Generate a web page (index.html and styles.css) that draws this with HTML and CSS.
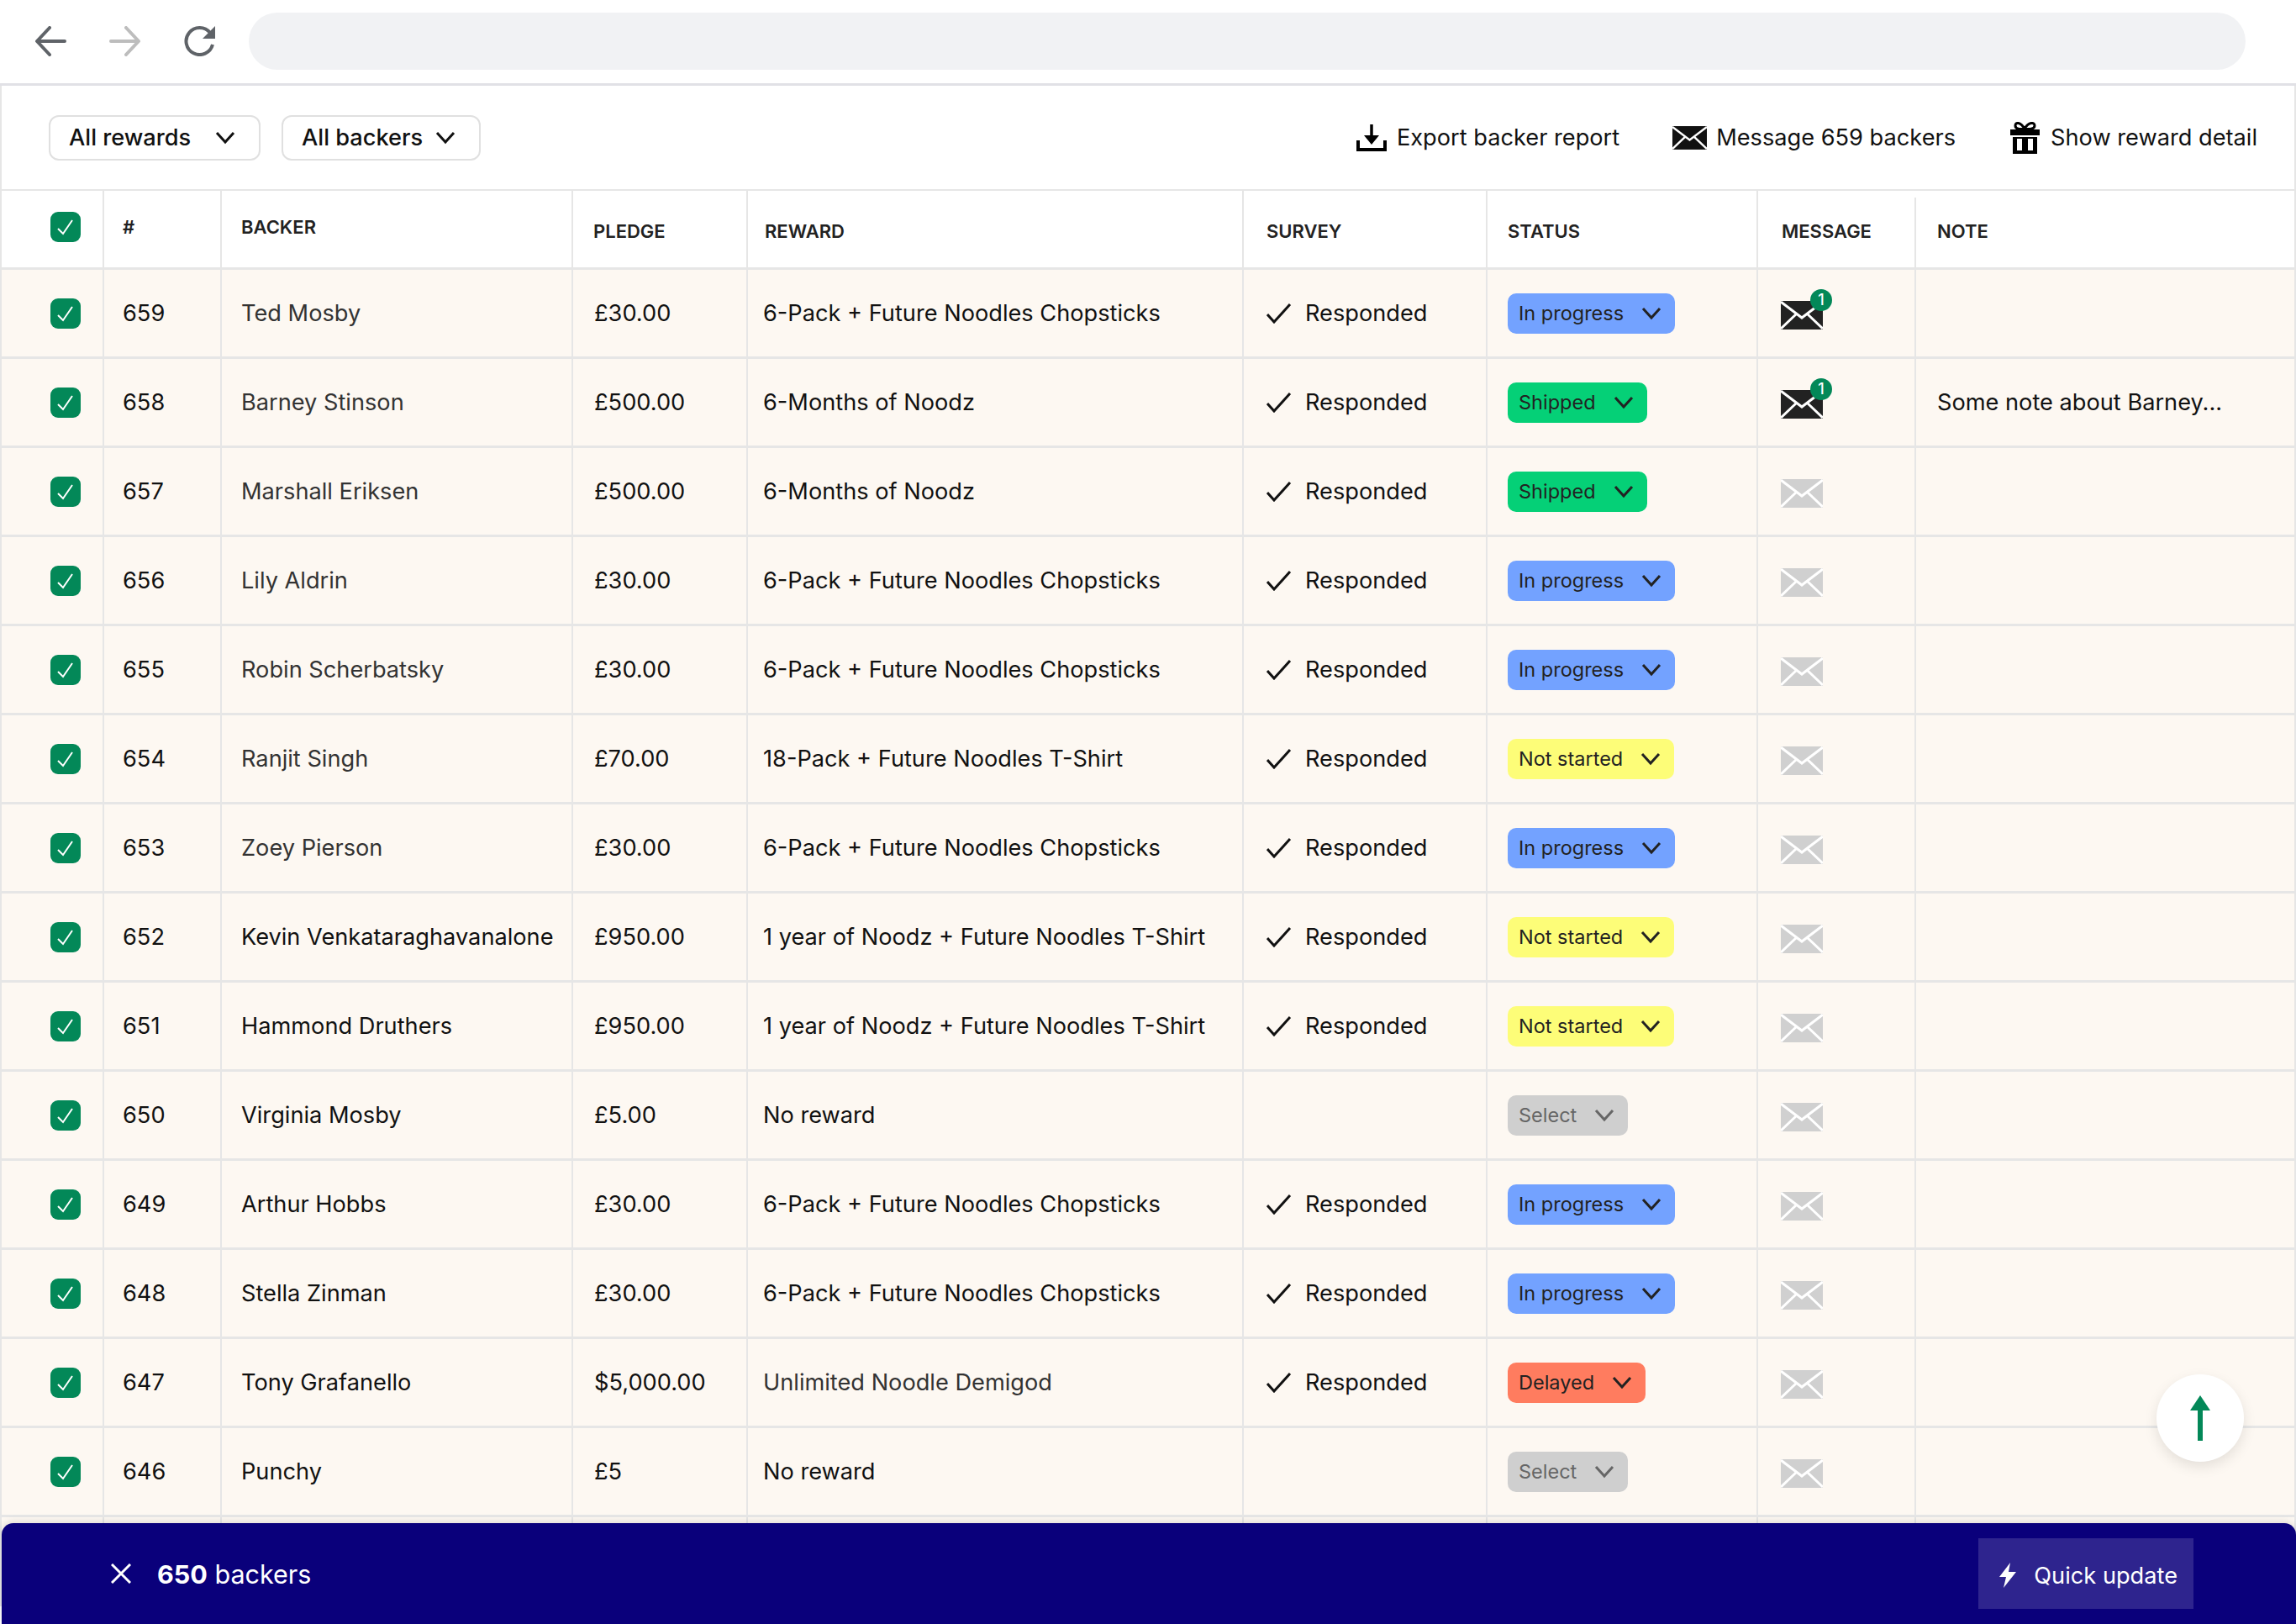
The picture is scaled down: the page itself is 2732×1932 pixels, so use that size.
FILE: index.html
```html
<!DOCTYPE html>
<html lang="en">
<head>
  <meta charset="UTF-8" />
  <title>Backer report</title>
  <link rel="stylesheet" href="styles.css">
</head>
<body>
  <svg class="defs" width="0" height="0">
    <symbol id="env" viewBox="0 0 50 34">
      <rect width="50" height="34" fill="currentColor"/>
      <path d="M0 1 25 20 50 1M0 33 19 15M50 33 31 15" fill="none" stroke="#fff" stroke-width="3"/>
    </symbol>
    <symbol id="chev" viewBox="0 0 24 16">
      <path d="M2 2 12 13 22 2" fill="none" stroke="currentColor" stroke-width="3"/>
    </symbol>
    <symbol id="box" viewBox="0 0 36 36">
      <rect width="36" height="36" rx="9" fill="#038858"/>
      <path d="M9 20 15 26 26 10" fill="none" stroke="#fff" stroke-width="2"/>
    </symbol>
    <symbol id="tick" viewBox="0 0 30 24">
      <path d="M1 13 9 22 28 1" fill="none" stroke="#111" stroke-width="3"/>
    </symbol>
  </svg>

  <header class="browser-bar">
    <svg class="nav-icon" width="38" height="36" viewBox="0 0 38 36"><path d="M36 18H4M18 2 3 18 18 34" fill="none" stroke="#5f6368" stroke-width="4" stroke-linecap="round" stroke-linejoin="round"/></svg>
    <svg class="nav-icon" width="38" height="36" viewBox="0 0 38 36"><path d="M2 18H34M20 2 35 18 20 34" fill="none" stroke="#bdbdbd" stroke-width="4" stroke-linecap="round" stroke-linejoin="round"/></svg>
    <svg class="nav-icon" width="38" height="36" viewBox="0 0 38 36"><path d="M31 8A16 16 0 1 0 34 22" fill="none" stroke="#5f6368" stroke-width="4"/><path d="M37 0V15H22Z" fill="#5f6368"/></svg>
    <div class="address"></div>
  </header>

  <div class="toolbar">
    <button class="filter filter-rewards">All rewards <svg width="24" height="16"><use href="#chev"/></svg></button>
    <button class="filter">All backers <svg width="24" height="16"><use href="#chev"/></svg></button>
    <div class="actions">
      <a class="action">
        <svg width="36" height="32" viewBox="0 0 36 32"><path d="M18 0V16" stroke="#000" stroke-width="3.5"/><path d="M9 13H27L18 24Z"/><path d="M2 19V30H34V19" fill="none" stroke="#000" stroke-width="4"/></svg>
        Export backer report
      </a>
      <a class="action action-msg">
        <svg class="env-lg" width="41" height="30"><use href="#env"/></svg>
        Message 659 backers
      </a>
      <a class="action action-gift">
        <svg width="35" height="38" viewBox="0 0 35 38"><path d="M17 8C12 0 6 0 6 4.500S12 9 17 8C22 0 29 0 29 4.500S22 9 17 8Z" fill="none" stroke="#000" stroke-width="3"/><path d="M0 9H35V16H0ZM3 18H32V38H3ZM8 20V34H14V20ZM21 20V34H27V20Z" fill-rule="evenodd"/></svg>
        Show reward detail
      </a>
    </div>
  </div>

  <table class="backers">
    <thead>
      <tr>
        <th class="high"><svg class="check" width="36" height="36"><use href="#box"/></svg></th>
        <th class="high">#</th>
        <th class="high">BACKER</th>
        <th>PLEDGE</th>
        <th>REWARD</th>
        <th>SURVEY</th>
        <th>STATUS</th>
        <th class="short-line">MESSAGE</th>
        <th>NOTE</th>
      </tr>
    </thead>
    <tbody>
      <tr>
        <td><svg class="check" width="36" height="36"><use href="#box"/></svg></td><td>659</td><td class="soft">Ted Mosby</td><td>£30.00</td><td>6-Pack + Future Noodles Chopsticks</td>
        <td><span class="survey"><svg width="30" height="24"><use href="#tick"/></svg>Responded</span></td>
        <td><span class="pill progress">In progress <svg width="24" height="16"><use href="#chev"/></svg></span></td>
        <td><span class="msg on"><svg width="50" height="34"><use href="#env"/></svg><b class="badge">1</b></span></td><td></td>
      </tr>
      <tr>
        <td><svg class="check" width="36" height="36"><use href="#box"/></svg></td><td>658</td><td class="soft">Barney Stinson</td><td>£500.00</td><td>6-Months of Noodz</td>
        <td><span class="survey"><svg width="30" height="24"><use href="#tick"/></svg>Responded</span></td>
        <td><span class="pill shipped">Shipped <svg width="24" height="16"><use href="#chev"/></svg></span></td>
        <td><span class="msg on"><svg width="50" height="34"><use href="#env"/></svg><b class="badge">1</b></span></td><td>Some note about Barney...</td>
      </tr>
      <tr>
        <td><svg class="check" width="36" height="36"><use href="#box"/></svg></td><td>657</td><td class="soft">Marshall Eriksen</td><td>£500.00</td><td>6-Months of Noodz</td>
        <td><span class="survey"><svg width="30" height="24"><use href="#tick"/></svg>Responded</span></td>
        <td><span class="pill shipped">Shipped <svg width="24" height="16"><use href="#chev"/></svg></span></td>
        <td><span class="msg"><svg width="50" height="34"><use href="#env"/></svg></span></td><td></td>
      </tr>
      <tr>
        <td><svg class="check" width="36" height="36"><use href="#box"/></svg></td><td>656</td><td class="soft">Lily Aldrin</td><td>£30.00</td><td>6-Pack + Future Noodles Chopsticks</td>
        <td><span class="survey"><svg width="30" height="24"><use href="#tick"/></svg>Responded</span></td>
        <td><span class="pill progress">In progress <svg width="24" height="16"><use href="#chev"/></svg></span></td>
        <td><span class="msg"><svg width="50" height="34"><use href="#env"/></svg></span></td><td></td>
      </tr>
      <tr>
        <td><svg class="check" width="36" height="36"><use href="#box"/></svg></td><td>655</td><td class="soft">Robin Scherbatsky</td><td>£30.00</td><td>6-Pack + Future Noodles Chopsticks</td>
        <td><span class="survey"><svg width="30" height="24"><use href="#tick"/></svg>Responded</span></td>
        <td><span class="pill progress">In progress <svg width="24" height="16"><use href="#chev"/></svg></span></td>
        <td><span class="msg"><svg width="50" height="34"><use href="#env"/></svg></span></td><td></td>
      </tr>
      <tr>
        <td><svg class="check" width="36" height="36"><use href="#box"/></svg></td><td>654</td><td class="soft">Ranjit Singh</td><td>£70.00</td><td>18-Pack + Future Noodles T-Shirt</td>
        <td><span class="survey"><svg width="30" height="24"><use href="#tick"/></svg>Responded</span></td>
        <td><span class="pill waiting">Not started <svg width="24" height="16"><use href="#chev"/></svg></span></td>
        <td><span class="msg"><svg width="50" height="34"><use href="#env"/></svg></span></td><td></td>
      </tr>
      <tr>
        <td><svg class="check" width="36" height="36"><use href="#box"/></svg></td><td>653</td><td class="soft">Zoey Pierson</td><td>£30.00</td><td>6-Pack + Future Noodles Chopsticks</td>
        <td><span class="survey"><svg width="30" height="24"><use href="#tick"/></svg>Responded</span></td>
        <td><span class="pill progress">In progress <svg width="24" height="16"><use href="#chev"/></svg></span></td>
        <td><span class="msg"><svg width="50" height="34"><use href="#env"/></svg></span></td><td></td>
      </tr>
      <tr>
        <td><svg class="check" width="36" height="36"><use href="#box"/></svg></td><td>652</td><td>Kevin Venkataraghavanalone</td><td>£950.00</td><td>1 year of Noodz + Future Noodles T-Shirt</td>
        <td><span class="survey"><svg width="30" height="24"><use href="#tick"/></svg>Responded</span></td>
        <td><span class="pill waiting">Not started <svg width="24" height="16"><use href="#chev"/></svg></span></td>
        <td><span class="msg"><svg width="50" height="34"><use href="#env"/></svg></span></td><td></td>
      </tr>
      <tr>
        <td><svg class="check" width="36" height="36"><use href="#box"/></svg></td><td>651</td><td>Hammond Druthers</td><td>£950.00</td><td>1 year of Noodz + Future Noodles T-Shirt</td>
        <td><span class="survey"><svg width="30" height="24"><use href="#tick"/></svg>Responded</span></td>
        <td><span class="pill waiting">Not started <svg width="24" height="16"><use href="#chev"/></svg></span></td>
        <td><span class="msg"><svg width="50" height="34"><use href="#env"/></svg></span></td><td></td>
      </tr>
      <tr>
        <td><svg class="check" width="36" height="36"><use href="#box"/></svg></td><td>650</td><td>Virginia Mosby</td><td>£5.00</td><td>No reward</td>
        <td></td>
        <td><span class="pill select">Select <svg width="24" height="16"><use href="#chev"/></svg></span></td>
        <td><span class="msg"><svg width="50" height="34"><use href="#env"/></svg></span></td><td></td>
      </tr>
      <tr>
        <td><svg class="check" width="36" height="36"><use href="#box"/></svg></td><td>649</td><td>Arthur Hobbs</td><td>£30.00</td><td>6-Pack + Future Noodles Chopsticks</td>
        <td><span class="survey"><svg width="30" height="24"><use href="#tick"/></svg>Responded</span></td>
        <td><span class="pill progress">In progress <svg width="24" height="16"><use href="#chev"/></svg></span></td>
        <td><span class="msg"><svg width="50" height="34"><use href="#env"/></svg></span></td><td></td>
      </tr>
      <tr>
        <td><svg class="check" width="36" height="36"><use href="#box"/></svg></td><td>648</td><td>Stella Zinman</td><td>£30.00</td><td>6-Pack + Future Noodles Chopsticks</td>
        <td><span class="survey"><svg width="30" height="24"><use href="#tick"/></svg>Responded</span></td>
        <td><span class="pill progress">In progress <svg width="24" height="16"><use href="#chev"/></svg></span></td>
        <td><span class="msg"><svg width="50" height="34"><use href="#env"/></svg></span></td><td></td>
      </tr>
      <tr>
        <td><svg class="check" width="36" height="36"><use href="#box"/></svg></td><td>647</td><td>Tony Grafanello</td><td>$5,000.00</td><td class="soft">Unlimited Noodle Demigod</td>
        <td><span class="survey"><svg width="30" height="24"><use href="#tick"/></svg>Responded</span></td>
        <td><span class="pill delayed">Delayed <svg width="24" height="16"><use href="#chev"/></svg></span></td>
        <td><span class="msg"><svg width="50" height="34"><use href="#env"/></svg></span></td><td></td>
      </tr>
      <tr>
        <td><svg class="check" width="36" height="36"><use href="#box"/></svg></td><td>646</td><td>Punchy</td><td>£5</td><td>No reward</td>
        <td></td>
        <td><span class="pill select">Select <svg width="24" height="16"><use href="#chev"/></svg></span></td>
        <td><span class="msg"><svg width="50" height="34"><use href="#env"/></svg></span></td><td></td>
      </tr>
      <tr>
        <td></td><td></td><td></td><td></td><td></td><td></td><td></td><td></td><td></td>
      </tr>
    </tbody>
  </table>

  <button class="to-top" aria-label="Back to top">
    <svg width="24" height="54" viewBox="0 0 24 54"><path d="M12 0 24 18H0Z" fill="#038858"/><path d="M12 10V54" stroke="#038858" stroke-width="6"/></svg>
  </button>

  <div class="bulk-bar">
    <svg class="bulk-close" width="24" height="24" viewBox="0 0 24 24"><path d="M1 1 23 23M23 1 1 23" stroke="#fff" stroke-width="3"/></svg>
    <span class="bulk-count"><b>650</b> backers</span>
    <button class="quick">
      <svg width="20" height="30" viewBox="0 0 20 30"><path d="M13 0 0 17H8L5 30 20 11H11Z" fill="#fff"/></svg>
      Quick update
    </button>
  </div>
</body>
</html>
```

FILE: styles.css
```css
* {
  box-sizing: border-box;
}
html, body {
  height: 100%;
}
body {
  margin: 0;
  position: relative;
  overflow: hidden;
  background: #fff;
  color: #111;
  font-family: Inter, "Noto Sans", sans-serif;
  font-size: 27.2px;
}
button {
  font: inherit;
  color: inherit;
}
.defs {
  position: absolute;
}

/* browser chrome */
.browser-bar {
  display: flex;
  align-items: center;
  height: 102px;
  padding: 0 60px 2px 41px;
  border-bottom: 3px solid #e1e1e6;
}
.nav-icon {
  margin-right: 51px;
}
.nav-icon:nth-child(3) {
  margin-right: 39px;
}
.address {
  flex: 1;
  height: 68px;
  border-radius: 34px;
  background: #f1f2f4;
}

/* filters and actions */
.toolbar {
  display: flex;
  align-items: center;
  height: 123px;
  padding: 0 44px 0 56px;
  border-left: 2px solid #e6e6e6;
  border-right: 2px solid #e6e6e6;
}
.filter {
  display: flex;
  align-items: center;
  justify-content: space-between;
  width: 237px;
  height: 54px;
  margin-right: 25px;
  padding: 0 28px 0 22px;
  border: 2px solid #e0e0e0;
  border-radius: 12px;
  background: #fff;
  font-weight: 500;
}
.filter-rewards {
  width: 252px;
}
.actions {
  display: flex;
  align-items: center;
  margin-left: auto;
}
.action {
  display: flex;
  align-items: center;
  gap: 12px;
}
.action-msg {
  margin-left: 63px;
  gap: 11px;
}
.action-gift {
  margin-left: 65px;
  gap: 13px;
}

/* table */
.backers {
  width: 2732px;
  border-collapse: separate;
  border-spacing: 0;
  table-layout: fixed;
  border-left: 2px solid #e6e6e6;
  border-right: 2px solid #e6e6e6;
  border-top: 2px solid #e6e6e6;
}
.backers th,
.backers td {
  padding: 0;
  text-align: left;
  border-right: 2px solid #e6e6e6;
  border-bottom: 3px solid #e6e6e6;
  white-space: nowrap;
}
.backers th {
  height: 94px;
  padding-top: 4px;
  font-size: 22px;
  font-weight: 600;
  color: #222;
}
.backers th.high {
  padding-top: 0;
  padding-bottom: 6px;
}
.backers td {
  height: 106px;
  background: #fdf8f2;
}
.backers th:last-child,
.backers td:last-child {
  border-right: 0;
}
.backers th.short-line {
  border-right-color: transparent;
  background: linear-gradient(#e6e6e6, #e6e6e6) right bottom / 2px calc(100% - 8px) no-repeat;
  background-origin: border-box;
  background-clip: border-box;
}
.soft {
  color: #333;
}

/* column widths and insets */
th:nth-child(1), td:nth-child(1) { width: 122px; padding-left: 58px; }
th:nth-child(2), td:nth-child(2) { width: 140px; padding-left: 22px; }
th:nth-child(3), td:nth-child(3) { width: 418px; padding-left: 23px; }
th:nth-child(4), td:nth-child(4) { width: 208px; padding-left: 25px; }
th:nth-child(5), td:nth-child(5) { width: 590px; padding-left: 18px; }
th:nth-child(6), td:nth-child(6) { width: 290px; padding-left: 27px; }
th:nth-child(7), td:nth-child(7) { width: 322px; padding-left: 24px; }
th:nth-child(8), td:nth-child(8) { width: 188px; padding-left: 27px; }
th:nth-child(9), td:nth-child(9) { padding-left: 25px; }
.backers th:nth-child(4) {
  padding-left: 24px;
}
.backers th:nth-child(5) {
  padding-left: 20px;
}
.backers th:nth-child(8) {
  padding-left: 28px;
}

.check {
  display: block;
}
.survey {
  display: flex;
  align-items: center;
  gap: 16px;
}
.pill {
  display: inline-flex;
  align-items: center;
  gap: 21px;
  height: 48px;
  padding: 0 16px 0 13px;
  border-radius: 10px;
  font-size: 23.5px;
  color: #222;
  vertical-align: middle;
}
.progress { background: #73a2ff; }
.shipped { background: #05d077; }
.waiting { background: #fdfd78; }
.delayed { background: #ff7c5f; }
.select {
  background: #cfcfcf;
  color: #666;
}
.msg {
  position: relative;
  display: inline-block;
  width: 50px;
  height: 34px;
  margin-top: 4px;
  color: #d0d0d0;
  vertical-align: middle;
}
.msg svg {
  display: block;
}
.msg.on {
  color: #222;
}
.badge {
  position: absolute;
  top: -14px;
  left: 35px;
  width: 26px;
  height: 26px;
  border-radius: 50%;
  background: #038858;
  color: #fff;
  font-size: 18px;
  font-weight: 500;
  line-height: 26px;
  text-align: center;
}

/* floating bits */
.to-top {
  position: absolute;
  top: 1635px;
  left: 2566px;
  display: flex;
  align-items: center;
  justify-content: center;
  width: 104px;
  height: 104px;
  border: 0;
  border-radius: 50%;
  background: #fff;
  box-shadow: 0 6px 16px rgba(0, 0, 0, 0.1);
}
.bulk-bar {
  position: absolute;
  left: 2px;
  right: 0;
  bottom: 0;
  display: flex;
  align-items: center;
  height: 120px;
  padding: 0 122px 0 130px;
  border-radius: 14px 14px 0 0;
  background: #0a007b;
  box-shadow: 0 -2px 8px rgba(0, 0, 0, 0.12);
  color: #fff;
}
.bulk-close {
  margin-right: 31px;
}
.bulk-count {
  font-size: 30.5px;
}
.bulk-count b {
  font-weight: 700;
}
.quick {
  display: flex;
  align-items: center;
  gap: 21px;
  height: 84px;
  margin-left: auto;
  padding: 4px 19px 0 25px;
  border: 0;
  background: #2e248e;
  color: #fff;
}
```
